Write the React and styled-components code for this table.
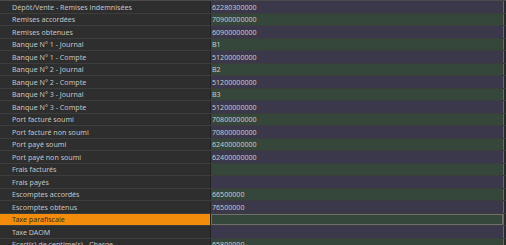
import React from "react";
import styled, { createGlobalStyle } from "styled-components";

const Global = createGlobalStyle`
  html, body { margin: 0; padding: 0; background: #2d2d2d; }
  body { font-family: "Noto Sans", "Open Sans", sans-serif; overflow: hidden; }
`;

const Grid = styled.div`
  width: 506px;
  height: 245px;
  overflow: hidden;
  box-sizing: border-box;
  border-top: 1px solid #4a4a4a;
  background: #2d2d2d;
`;

const Row = styled.div`
  display: grid;
  grid-template-columns: 211px 292px 1px 2px;
  height: 12.5px;
  box-sizing: border-box;
  border-bottom: 1px solid #3d3d3d;
`;

const Label = styled.div`
  display: flex;
  align-items: center;
  padding-left: 12px;
  font-size: 7.1px;
  white-space: nowrap;
  overflow: hidden;
  border-right: 1px solid #222;
  background: ${(p) => (p.$selected ? "#f48c0b" : "#2e2e2e")};
  color: ${(p) => (p.$selected ? "#3b3022" : "#c2c2c2")};
`;

const Value = styled.div`
  display: flex;
  align-items: center;
  padding-left: 1px;
  font-size: 7.1px;
  white-space: nowrap;
  overflow: hidden;
  color: #c6c6c6;
  box-sizing: border-box;
  background: ${(p) => (p.$even ? "#35463b" : "#3b384c")};
  ${(p) => (p.$selected ? "outline: 1px solid #6e6e6e; outline-offset: -1px;" : "")}
`;

const Edge = styled.div`
  background: #6a6a6a;
`;

const Dark = styled.div`
  background: #2a2a2a;
`;

const rows = [
  ["Dépôt/Vente - Remises indemnisées", "62280300000"],
  ["Remises accordées", "70900000000"],
  ["Remises obtenues", "60900000000"],
  ["Banque N° 1 - Journal", "B1"],
  ["Banque N° 1 - Compte", "51200000000"],
  ["Banque N° 2 - Journal", "B2"],
  ["Banque N° 2 - Compte", "51200000000"],
  ["Banque N° 3 - Journal", "B3"],
  ["Banque N° 3 - Compte", "51200000000"],
  ["Port facturé soumi", "70800000000"],
  ["Port facturé non soumi", "70800000000"],
  ["Port payé soumi", "62400000000"],
  ["Port payé non soumi", "62400000000"],
  ["Frais facturés", ""],
  ["Frais payés", ""],
  ["Escomptes accordés", "66500000"],
  ["Escomptes obtenus", "76500000"],
  ["Taxe parafiscale", ""],
  ["Taxe DAOM", ""],
  ["Ecart(s) de centime(s) - Charge", "65800000"],
];

export default function App() {
  return (
    <>
      <Global />
      <Grid>
        {rows.map(([label, value], i) => {
          const selected = i === 17;
          return (
            <Row key={i}>
              <Label $selected={selected}>{label}</Label>
              <Value $even={i % 2 === 1} $selected={selected}>{value}</Value>
              <Edge />
              <Dark />
            </Row>
          );
        })}
      </Grid>
    </>
  );
}
